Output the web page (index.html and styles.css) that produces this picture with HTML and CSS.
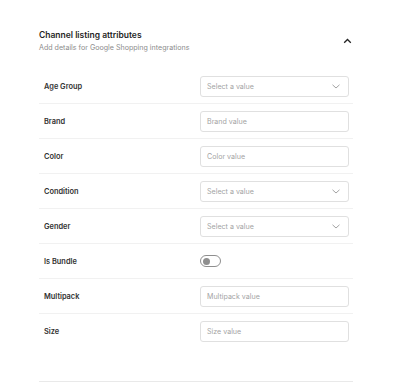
FILE: index.html
```html
<!DOCTYPE html>
<html>
<head>
<meta charset="utf-8">
<link rel="stylesheet" href="styles.css">
</head>
<body>
<section class="card">
  <header class="card-header">
    <div class="titles">
      <h2 class="title">Channel listing attributes</h2>
      <p class="subtitle">Add details for Google Shopping integrations</p>
    </div>
    <svg class="chev-up" width="9" height="6" viewBox="0 0 9 6"><path d="M1.2 4.8 L4.5 1.5 L7.8 4.8" fill="none" stroke="#222" stroke-width="1.3"/></svg>
  </header>
  <div class="rows">
    <div class="row"><span class="label">Age Group</span><div class="field select"><span class="ph">Select a value</span><svg class="chev" width="8" height="5" viewBox="0 0 8 5"><path d="M0.5 0.8 L4 4 L7.5 0.8" fill="none" stroke="#999" stroke-width="0.9"/></svg></div></div>
    <div class="row"><span class="label">Brand</span><div class="field"><span class="ph">Brand value</span></div></div>
    <div class="row"><span class="label">Color</span><div class="field"><span class="ph">Color value</span></div></div>
    <div class="row"><span class="label">Condition</span><div class="field select"><span class="ph">Select a value</span><svg class="chev" width="8" height="5" viewBox="0 0 8 5"><path d="M0.5 0.8 L4 4 L7.5 0.8" fill="none" stroke="#999" stroke-width="0.9"/></svg></div></div>
    <div class="row"><span class="label">Gender</span><div class="field select"><span class="ph">Select a value</span><svg class="chev" width="8" height="5" viewBox="0 0 8 5"><path d="M0.5 0.8 L4 4 L7.5 0.8" fill="none" stroke="#999" stroke-width="0.9"/></svg></div></div>
    <div class="row"><span class="label">Is Bundle</span><div class="toggle-wrap"><span class="toggle"><span class="knob"></span></span></div></div>
    <div class="row"><span class="label">Multipack</span><div class="field"><span class="ph">Multipack value</span></div></div>
    <div class="row last"><span class="label">Size</span><div class="field"><span class="ph">Size value</span></div></div>
  </div>
  <div class="footer-line"></div>
</section>
</body>
</html>
```

FILE: styles.css
```css
* { box-sizing: border-box; }
html, body { margin: 0; padding: 0; background: #fff; }
body { font-family: Inter, "Noto Sans", sans-serif; color: #222; }
.card { width: 314px; margin-left: 39px; padding-top: 27px; }
.card-header { display: flex; align-items: center; justify-content: space-between; height: 28px; }
.title { margin: 0; font-size: 8.5px; line-height: 12px; font-weight: 600; color: #1f1f1f; }
.subtitle { margin: 1px 0 0; font-size: 7.1px; line-height: 11px; color: #8c8c8c; }
.chev-up { margin-right: 1px; margin-top: 0; }
.rows { margin-top: 14px; }
.row { display: flex; align-items: center; justify-content: space-between; height: 35px; border-bottom: 1px solid #f1f1f1; padding: 0 4px 0 5px; }
.row.last { border-bottom: none; }
.label { font-size: 7.4px; font-weight: 600; color: #333; }
.field { width: 149px; height: 21px; border: 1px solid #e0e0e0; border-radius: 3px; display: flex; align-items: center; justify-content: space-between; padding: 0 8px 0 6px; }
.ph { font-size: 7.1px; color: #a3a3a3; }
.chev { margin-top: 1px; }
.toggle-wrap { width: 149px; }
.toggle { display: flex; align-items: center; width: 21px; height: 12px; border: 1px solid #8f8f8f; border-radius: 6px; padding-left: 2px; }
.knob { width: 7px; height: 7px; border-radius: 50%; background: #8f8f8f; }
.footer-line { margin-top: 32px; height: 1px; background: #e9e9e9; }
```
